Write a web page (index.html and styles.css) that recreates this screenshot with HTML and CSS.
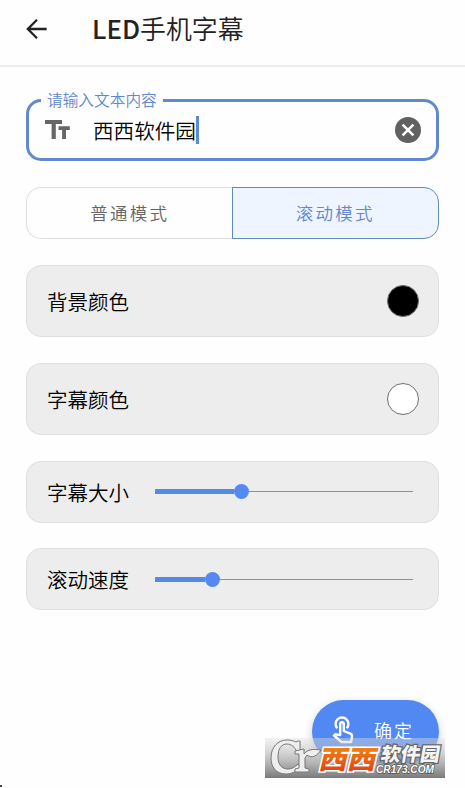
FILE: index.html
```html
<!DOCTYPE html>
<html lang="zh-CN">
<head>
<meta charset="utf-8">
<title>LED手机字幕</title>
<link rel="stylesheet" href="styles.css">
</head>
<body>
<header class="bar">
  <svg class="back" width="22" height="20" viewBox="0 0 22 20"><path d="M11 .8 1.8 10l9.200 9.200M2 10h18.700" fill="none" stroke="#222" stroke-width="2.300"/></svg>
  <h1 class="title"><span class="latin">LED</span>手机字幕</h1>
</header>
<main class="content">
  <div class="field">
    <span class="field-label">请输入文本内容</span>
    <svg class="tt" width="25" height="20" viewBox="0 0 25 20"><path d="M0 0h17v4h-6.200v15H6.600V4H0zM13.500 6.200h11.300v3.800h-3.800v9h-3.900v-9h-3.600z" fill="#666"/></svg>
    <span class="value">西西软件园</span><span class="caret"></span>
    <svg class="clear" width="26" height="26" viewBox="0 0 26 26"><circle cx="13" cy="13" r="13" fill="#616161"/><path d="m7.600 7.600 10.800 10.800m0-10.800L7.600 18.400" stroke="#fff" stroke-width="2.600"/></svg>
  </div>
  <div class="toggle">
    <div class="option">普通模式</div>
    <div class="option selected">滚动模式</div>
  </div>
  <section class="card tall">
    <span>背景颜色</span><i class="swatch black"></i>
  </section>
  <section class="card tall">
    <span>字幕颜色</span><i class="swatch"></i>
  </section>
  <section class="card">
    <span>字幕大小</span>
    <div class="slider"><i class="fill size"></i><i class="thumb"></i><i class="track"></i></div>
  </section>
  <section class="card last">
    <span>滚动速度</span>
    <div class="slider"><i class="fill speed"></i><i class="thumb"></i><i class="track"></i></div>
  </section>
</main>
<button class="confirm">
  <svg width="22" height="28" viewBox="0 0 22 28"><path d="M5.200 12.200a6.400 6.400 0 1 1 9.600 0" fill="none" stroke="#fff" stroke-width="2.400"/><path d="M8.200 8a1.800 1.800 0 0 1 3.600 0v7l6.700 2.700q1.800.8 1.500 2.800l-.9 5.500H9.500L2 19.500l1.200-1.200 5 .8z" fill="none" stroke="#fff" stroke-width="2.400" stroke-linejoin="round"/></svg>
  <span>确定</span>
</button>
<svg class="watermark" width="180" height="40" viewBox="0 0 180 40">
  <defs>
    <linearGradient id="shade" x2="0" y2="1"><stop stop-color="#e0e0e0" stop-opacity=".4"/><stop offset="1" stop-color="#707070" stop-opacity=".94"/></linearGradient>
    <linearGradient id="orange" x2="0" y2="1"><stop stop-color="#f49a12"/><stop offset="1" stop-color="#df3512"/></linearGradient>
  </defs>
  <rect width="180" height="40" fill="url(#shade)"/>
  <g class="logo">
    <path d="M35 3v11h-3C30 9 26 6 22 6c-6 0-9 5-9 13s4 12 10 12c4 0 7-2 10-5l2 3c-4 5-9 7-14 7C11 36 6 29 6 20 6 9 13 2 22 2c4 0 7 1 9 2l2-1z"/>
    <path d="M30 13l9-2v5c4-5 9-5 17-4-4 6-9 9-14 5l-2 3v10l4 1v3H30v-3l4-1V16h-4z"/>
  </g>
  <text class="brand" transform="translate(53 31) skewX(-13)" font-size="26" textLength="57" lengthAdjust="spacingAndGlyphs">西西</text>
  <text class="site" transform="translate(115 23) skewX(-10)" font-size="19" textLength="59" lengthAdjust="spacingAndGlyphs">软件园</text>
  <text class="domain" x="111" y="34.500" font-size="10" textLength="58" lengthAdjust="spacingAndGlyphs">CR173.COM</text>
</svg>
<i class="speck"></i>
</body>
</html>
```
FILE: styles.css
```css
* { box-sizing: border-box; }
body {
  margin: 0;
  height: 788px;
  position: relative;
  overflow: hidden;
  background: #fefefe;
  color: #111;
  font-family: "Noto Sans CJK SC", sans-serif;
  font-weight: 350;
}
svg { display: block; flex: none; }
.bar {
  height: 67px;
  display: flex;
  align-items: center;
  padding: 0 26px 8px;
  border-bottom: 2px solid #ededed;
}
.title {
  margin: -2px 0 0 44px;
  color: #222;
  font-size: 25.900px;
  line-height: 38px;
  font-weight: 350;
}
.latin { font-weight: 500; }
.content { padding: 32px 26px 0; }
.field {
  position: relative;
  height: 62px;
  display: flex;
  align-items: center;
  padding: 0 15px 0 16px;
  border: 3px solid #6089cf;
  border-radius: 15px;
}
.field-label {
  position: absolute;
  left: 12px;
  top: -14px;
  padding: 0 6px;
  background: #fefefe;
  color: #6089cf;
  font-size: 15.700px;
  line-height: 24px;
}
.value { margin-left: 23px; font-size: 20.600px; line-height: 30px; color: #000; }
.caret { width: 3px; height: 28px; background: #6089cf; }
.clear { margin-left: auto; }
.toggle { display: flex; height: 52px; margin-top: 26px; }
.option {
  flex: 1;
  display: flex;
  align-items: center;
  justify-content: center;
  padding-bottom: 2px;
  border: 1px solid #dedede;
  border-right: 0;
  border-radius: 15px 0 0 15px;
  color: #666;
  font-size: 17.500px;
  letter-spacing: 2.300px;
}
.selected {
  margin-left: -1px;
  border: 1.500px solid #6089bf;
  border-radius: 0 15px 15px 0;
  background: #eff5ff;
  color: #6089cf;
}
.card {
  height: 62px;
  margin-top: 26px;
  display: flex;
  align-items: center;
  padding: 0 25px 1px 20px;
  border: 1.500px solid #dfdfdf;
  border-radius: 15px;
  background: #ededed;
  font-size: 20.500px;
  line-height: 30px;
  color: #000;
}
.tall { height: 72px; padding-right: 19px; padding-bottom: 1px; }
.last { margin-top: 25px; padding-bottom: 0; }
.swatch {
  margin-left: auto;
  width: 32px;
  height: 32px;
  border: 1.500px solid #707070;
  border-radius: 50%;
  background: #fff;
}
.black { background: #000; }
.slider { flex: 1; display: flex; align-items: center; margin-left: 26px; }
.fill { height: 5px; background: #5589e6; }
.size { width: 79px; }
.speed { width: 50px; }
.thumb { width: 15px; height: 15px; border-radius: 50%; background: #5489f2; }
.track { flex: 1; height: 1px; background: #909090; }
.confirm {
  position: absolute;
  left: 312px;
  top: 700px;
  width: 127px;
  height: 63px;
  display: flex;
  align-items: center;
  padding: 0 20px 3px;
  border: 0;
  border-radius: 32px;
  background: #5288f2;
  box-shadow: 0 3px 8px #0003;
  color: #fff;
  font: inherit;
  font-size: 18px;
  letter-spacing: 2px;
}
.confirm span { margin-left: 20px; white-space: nowrap; }
.watermark { position: absolute; left: 265px; top: 738px; }
.logo { fill: #eee; stroke: #777; stroke-width: 1; }
.brand, .site { font-family: "Noto Sans CJK SC", sans-serif; font-weight: 900; paint-order: stroke; stroke: #fff; stroke-width: 3px; }
.brand { fill: url(#orange); }
.site { fill: #f5f5f5; stroke: #666; stroke-width: 2.500px; }
.domain { font-family: "Liberation Sans", sans-serif; font-style: italic; font-weight: 700; fill: #fff; paint-order: stroke; stroke: #555; stroke-width: 1.500px; }
.speck { position: absolute; left: 0; top: 785px; width: 2px; height: 2px; background: #444; }
```
